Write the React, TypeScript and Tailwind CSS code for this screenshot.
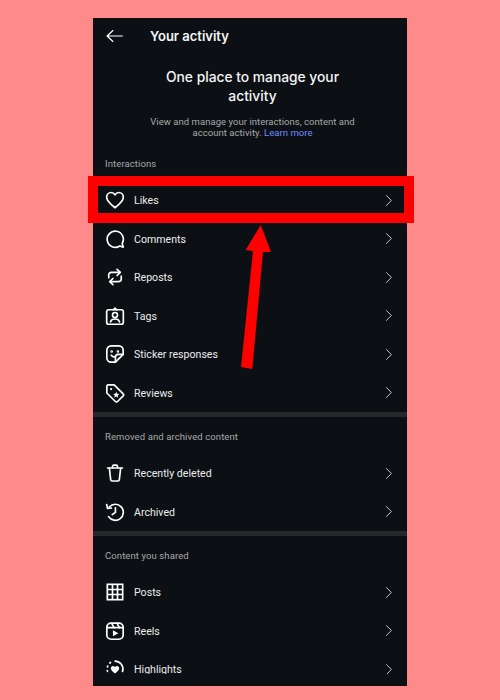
import React from "react";

const S = { fill: "none", stroke: "#fff", strokeWidth: 2, strokeLinecap: "round" as const, strokeLinejoin: "round" as const };

const icons: Record<string, React.ReactNode> = {
  heart: <path {...S} d="M12 21.3 C6 16.5 2 12.8 2 8.6 C2 5.2 4.6 3 7.3 3 C9.4 3 11 4 12 5.9 C13 4 14.6 3 16.7 3 C19.4 3 22 5.2 22 8.6 C22 12.8 18 16.5 12 21.3 Z" />,
  comment: <path {...S} d="M20.6 17.3 A9.7 9.7 0 1 0 17.6 20.4 L21.9 21.7 Z" />,
  repost: <g {...S}><path d="M4.5 13 V9.5 A3 3 0 0 1 7.5 6.5 H18" /><path d="M14.5 2.8 L18.3 6.5 L14.5 10.2" /><path d="M19.5 11 V14.5 A3 3 0 0 1 16.5 17.5 H6" /><path d="M9.5 13.8 L5.7 17.5 L9.5 21.2" /></g>,
  tag: <g {...S}><rect x="2" y="4.5" width="20" height="17.4" rx="2.5" /><circle cx="12" cy="10.8" r="3" /><path d="M6.6 19 C7.3 16.5 9.5 15.6 12 15.6 C14.5 15.6 16.7 16.5 17.4 19" /><path d="M10 4.5 L12 2.5 L14 4.5" /></g>,
  sticker: <g {...S}><path d="M21.8 12.5 V7.5 A5.2 5.2 0 0 0 16.6 2.3 H7.4 A5.2 5.2 0 0 0 2.2 7.5 V16.6 A5.2 5.2 0 0 0 7.4 21.8 H12.5 Z" /><path d="M21.8 12.5 H16 A3.5 3.5 0 0 0 12.5 16 V21.8" /><path d="M7.5 13.5 C8.5 15 10 15.6 12 15.4" /><circle cx="8" cy="9" r=".6" /><circle cx="15.5" cy="9" r=".6" /></g>,
  review: <g><path {...S} d="M2.2 3.8 A1.6 1.6 0 0 1 3.8 2.2 H11 L21.8 13 A1.8 1.8 0 0 1 21.8 15.5 L15 22.2 A1.8 1.8 0 0 1 12.5 22.2 L2.2 12 Z" /><circle cx="7.3" cy="7.3" r="1.3" fill="#fff" /><path fill="#fff" d="M13.5 10.5 L14.6 13 L17.2 13.2 L15.2 15 L15.8 17.6 L13.5 16.2 L11.2 17.6 L11.8 15 L9.8 13.2 L12.4 13 Z" /></g>,
  trash: <g {...S}><path d="M3 6 H21" /><path d="M5.2 6 L6.8 20 A1.8 1.8 0 0 0 8.6 21.6 H15.4 A1.8 1.8 0 0 0 17.2 20 L18.8 6" /><path d="M9 5.5 V4.2 A1.7 1.7 0 0 1 10.7 2.5 H13.3 A1.7 1.7 0 0 1 15 4.2 V5.5" /></g>,
  archive: <g {...S}><path d="M5.2 6 A9.6 9.6 0 1 1 4.3 17.5" /><path d="M2 3 L3 7.6 L7.6 7.2" /><path d="M12.5 7 V12.5 L8.8 15" /></g>,
  grid: <g {...S} strokeLinecap="butt" strokeLinejoin="miter"><rect x="2.8" y="2.8" width="18.4" height="18.4" /><path d="M9 2.8 V21.2 M15 2.8 V21.2 M2.8 9 H21.2 M2.8 15 H21.2" /></g>,
  reels: <g><g {...S}><rect x="2.2" y="2.5" width="19.6" height="19.4" rx="5" /><path d="M2.5 8 H21.5" /><path d="M8 2.8 L10.8 8 M14.5 2.8 L17.3 8" /></g><path fill="#fff" d="M9.5 11 L16 14.6 L9.5 18.2 Z" /></g>,
  highlight: <g><path {...S} d="M12 2.5 A9.5 9.5 0 0 1 21 15" /><path {...S} d="M5.8 4.8 L6.6 4.2 M3.2 8.4 L3 9.4 M2.7 13.8 L3 14.8" /><path fill="#fff" d="M12 17.3 C8.8 14.8 7 13 7 11 C7 9.4 8.2 8.3 9.6 8.3 C10.6 8.3 11.4 8.8 12 9.8 C12.6 8.8 13.4 8.3 14.4 8.3 C15.8 8.3 17 9.4 17 11 C17 13 15.2 14.8 12 17.3 Z" /></g>,
};

function Row({ icon, label }: { icon: string; label: string }) {
  return (
    <div className="flex h-[38.5px] items-center pl-[12px] pr-[14px]">
      <svg viewBox="0 0 24 24" className="h-[20px] w-[20px] shrink-0">{icons[icon]}</svg>
      <span className="ml-[9px] flex-1 pt-[2px] font-['Roboto',sans-serif] text-[10.6px] leading-[14px] text-[#ececec]">{label}</span>
      <svg viewBox="0 0 10 16" className="h-[13px] w-[8px] shrink-0">
        <path d="M1.5 1.5 L8 8 L1.5 14.5" fill="none" stroke="#dcdcdc" strokeWidth="1.1" />
      </svg>
    </div>
  );
}

function Heading({ children }: { children: React.ReactNode }) {
  return <div className="px-[12px] font-['Roboto',sans-serif] text-[9.5px] leading-[12px] tracking-[0.1px] text-[#a8a8a8]">{children}</div>;
}

export default function App() {
  return (
    <div className="relative h-[700px] w-[500px] overflow-hidden bg-[#fe8b8a] font-['Inter',sans-serif]">
      <div className="absolute left-[93px] top-[18px] flex h-[668px] w-[314px] flex-col overflow-hidden bg-[#0c1014]">
        <div className="flex h-[35px] shrink-0 items-center pl-[12px]">
          <svg viewBox="0 0 20 16" className="h-[14px] w-[19px]">
            <path d="M19.5 8 H1.5 M8.5 1.5 L1.5 8 L8.5 14.5" fill="none" stroke="#fff" strokeWidth="1.4" />
          </svg>
          <span className="ml-[26px] text-[13px] font-semibold leading-[16px] text-[#f5f5f5]">Your activity</span>
        </div>
        <div className="mt-[15px] pl-[5px] text-center text-[13.8px] font-medium leading-[19px] text-[#f5f5f5]">
          One place to manage your<br />activity
        </div>
        <div className="mt-[10px] pl-[5px] text-center font-['Roboto',sans-serif] text-[9.5px] leading-[11px] tracking-[0.04px] text-[#a8a8a8]">
          View and manage your interactions, content and<br />account activity. <span className="text-[#708dff]">Learn more</span>
        </div>
        <div className="mt-[20px]"><Heading>Interactions</Heading></div>
        <div className="mt-[11px]">
          <Row icon="heart" label="Likes" />
          <Row icon="comment" label="Comments" />
          <Row icon="repost" label="Reposts" />
          <Row icon="tag" label="Tags" />
          <Row icon="sticker" label="Sticker responses" />
          <Row icon="review" label="Reviews" />
        </div>
        <div className="h-[5px] shrink-0 bg-[#25292c]" />
        <div className="mt-[14px]"><Heading>Removed and archived content</Heading></div>
        <div className="mt-[11px]">
          <Row icon="trash" label="Recently deleted" />
          <Row icon="archive" label="Archived" />
        </div>
        <div className="h-[5px] shrink-0 bg-[#25292c]" />
        <div className="mt-[14px]"><Heading>Content you shared</Heading></div>
        <div className="mt-[11px]">
          <Row icon="grid" label="Posts" />
          <Row icon="reels" label="Reels" />
          <Row icon="highlight" label="Highlights" />
        </div>
        <div className="absolute bottom-0 left-0 h-[12px] w-full bg-[#0c1014]" />
      </div>
      <div className="absolute left-[88px] top-[176px] h-[47px] w-[326px] border-[10px] border-[#ff0000]" />
      <svg viewBox="0 0 500 700" className="absolute left-0 top-0 h-[700px] w-[500px]">
        <polygon points="260.7,225 245.7,250 253,251 241,367 252.3,369 263,252 271,252" fill="#ff0000" />
      </svg>
    </div>
  );
}
